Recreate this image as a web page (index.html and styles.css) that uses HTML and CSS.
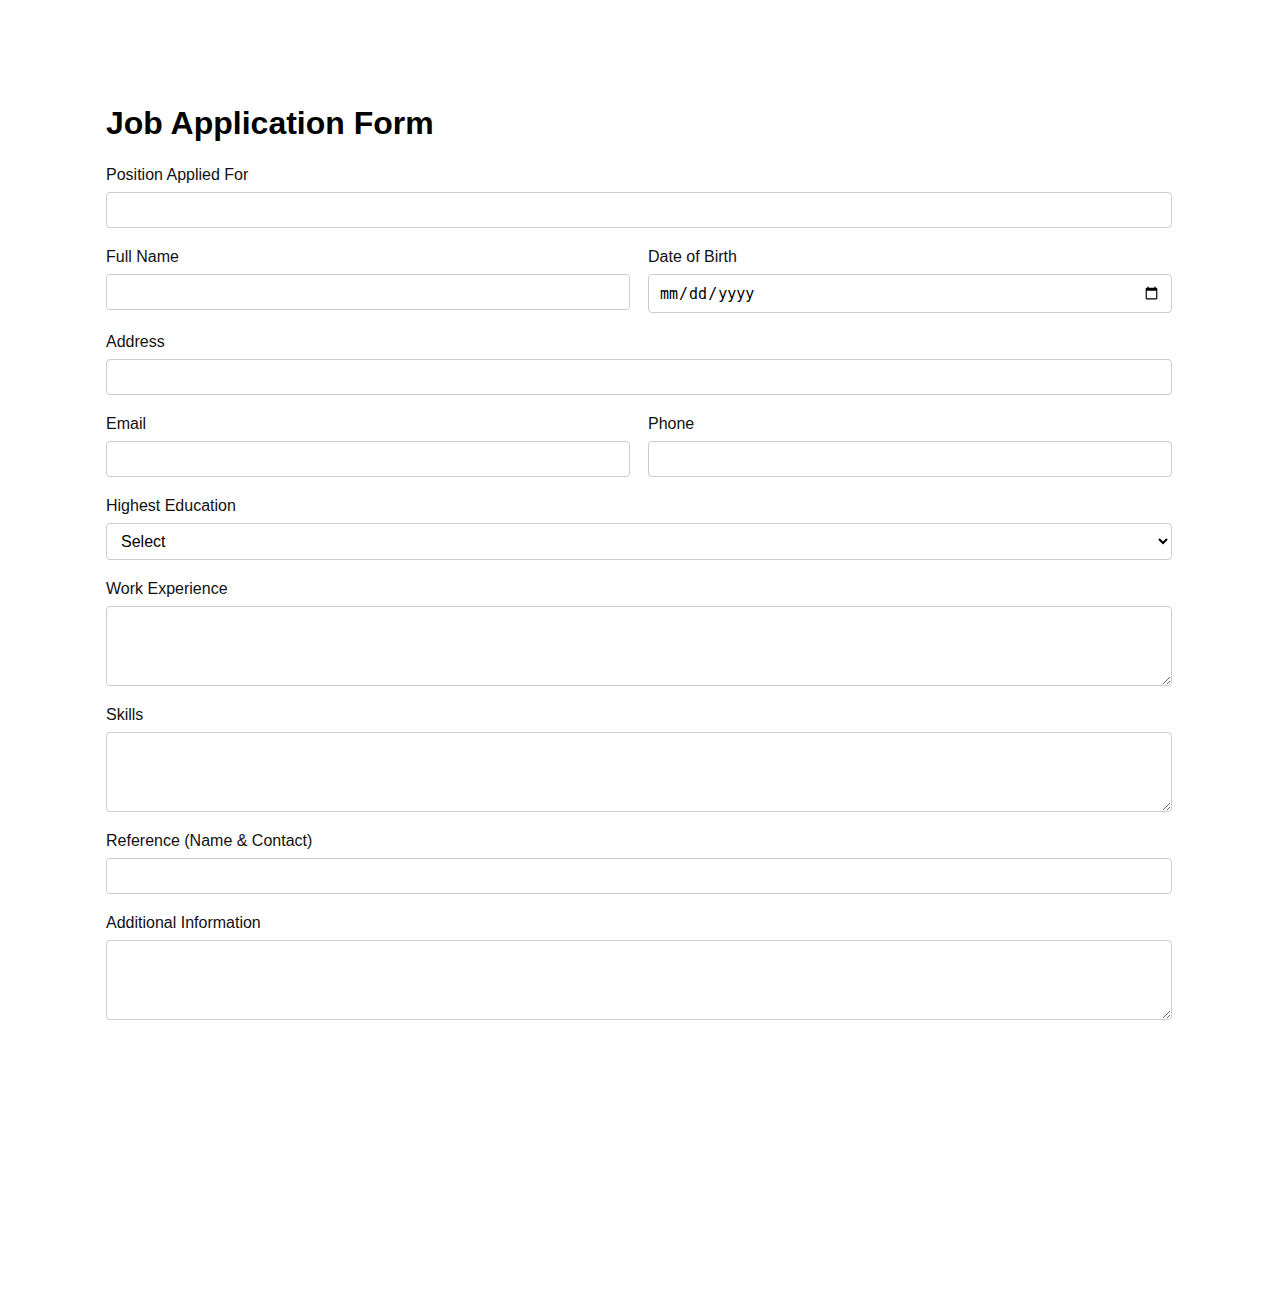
FILE: index.html
```html
<!DOCTYPE html>
<html>
	<head>
		<meta charset="utf-8" />
		<title>Job Application Form</title>
		<link rel="stylesheet" href="styles.css">
	</head>
	<body>
	<div class="container">
		<h1>Job Application Form</h1>
		<form>
			<div class="field">
				<label for="position">Position Applied For</label>
				<input type="text" id="position" name="position" />
			</div>

			<div class="row">
				<div class="field">
					<label for="fullname">Full Name</label>
					<input type="text" id="fullname" name="fullname" />
				</div>
				<div class="field">
					<label for="dob">Date of Birth</label>
					<input type="date" id="dob" name="dob" />
				</div>
			</div>

			<div class="field">
				<label for="address">Address</label>
				<input type="text" id="address" name="address" />
			</div>

			<div class="row">
				<div class="field">
					<label for="email">Email</label>
					<input type="email" id="email" name="email" />
				</div>
				<div class="field">
					<label for="phone">Phone</label>
					<input type="tel" id="phone" name="phone" />
				</div>
			</div>

			<div class="field">
				<label for="education">Highest Education</label>
				<select id="education" name="education">
					<option>Select</option>
					<option>High School</option>
					<option>Diploma</option>
					<option>Bachelor's Degree</option>
					<option>Master's Degree</option>
					<option>Doctorate</option>
				</select>
			</div>

			<div class="field">
				<label for="experience">Work Experience</label>
				<textarea id="experience" name="experience"></textarea>
			</div>

			<div class="field">
				<label for="skills">Skills</label>
				<textarea id="skills" name="skills"></textarea>
			</div>

			<div class="field">
				<label for="reference">Reference (Name &amp; Contact)</label>
				<input type="text" id="reference" name="reference" />
			</div>

			<div class="field">
				<label for="additional">Additional Information</label>
				<textarea id="additional" name="additional"></textarea>
			</div>
		</form>
	</div>
	</body>
</html>
```

FILE: styles.css
```css
*{box-sizing: border-box;}
body{margin: 0;background: #fff;font-family: "Liberation Sans", Arial, sans-serif;color: #000;}
.container{max-width: 1106px;margin: 0 auto;padding: 105px 20px 60px;}
h1{font-size: 32px;font-weight: bold;margin: 0 0 24px;line-height: 37px;}
form{display: flex;flex-direction: column;gap: 20px;}
.row{display: grid;grid-template-columns: 1fr 1fr;gap: 18px;}
.field label{display: block;font-size: 16px;line-height: 18px;margin-bottom: 8px;color: #111;}
.field input,
.field select,
.field textarea{display: block;width: 100%;padding: 8px;border: 1px solid #ccc;border-radius: 4px;font-family: "Liberation Sans", Arial, sans-serif;font-size: 16px;background: #fff;color: #000;}
.field input{height: 36px;}
.field input[type=date]{height: 39px;font-family: "DejaVu Sans Mono", monospace;font-size: 15px;padding: 8px 10px;}
.field select{height: 37px;padding: 8px 10px;}
.field textarea{height: 80px;resize: vertical;}
```
